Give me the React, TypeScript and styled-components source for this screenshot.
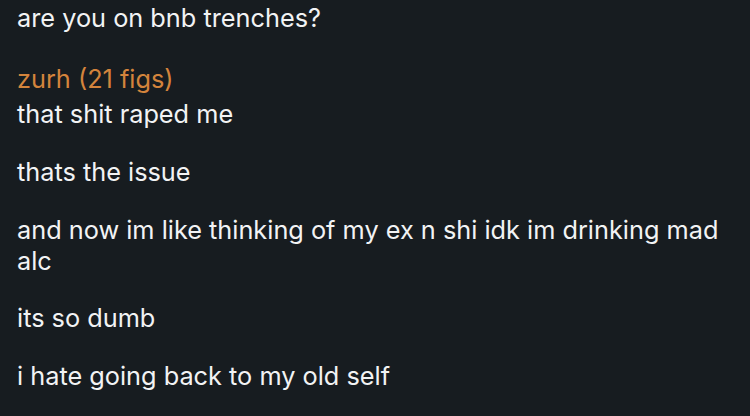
import React from 'react';
import styled, { createGlobalStyle } from 'styled-components';

const GlobalStyle = createGlobalStyle`
  html, body {
    margin: 0;
    padding: 0;
    background: #171c20;
  }
  body {
    font-family: Inter, "Noto Sans", sans-serif;
    -webkit-font-smoothing: antialiased;
  }
`;

interface Group {
  sender?: string;
  messages: string[];
}

const groups: Group[] = [
  { messages: ['are you on bnb trenches?'] },
  {
    sender: 'zurh (21 figs)',
    messages: [
      'that shit raped me',
      'thats the issue',
      'and now im like thinking of my ex n shi idk im drinking mad alc',
      'its so dumb',
      'i hate going back to my old self',
    ],
  },
];

const App = () => (
  <>
    <GlobalStyle />
    <Chat>
      {groups.map((g, i) => (
        <GroupBlock key={i}>
          {g.sender && <Sender>{g.sender}</Sender>}
          <MessageList>
            {g.messages.map((m, j) => (
              <Message key={j}>{m}</Message>
            ))}
          </MessageList>
        </GroupBlock>
      ))}
    </Chat>
  </>
);

const Chat = styled.div`
  width: 750px;
  height: 416px;
  box-sizing: border-box;
  padding: 2.3px 24px 0 17px;
  display: flex;
  flex-direction: column;
  gap: 30px;
  overflow: hidden;
  background: #171c20;
`;

const GroupBlock = styled.div`
  display: flex;
  flex-direction: column;
  gap: 4px;
`;

const Sender = styled.div`
  color: #d4843c;
  font-size: 25.3px;
  line-height: 31px;
`;

const MessageList = styled.div`
  display: flex;
  flex-direction: column;
  gap: 26.7px;
`;

const Message = styled.div`
  color: #f2f3f4;
  font-size: 25.3px;
  line-height: 31px;
`;

export default App;
